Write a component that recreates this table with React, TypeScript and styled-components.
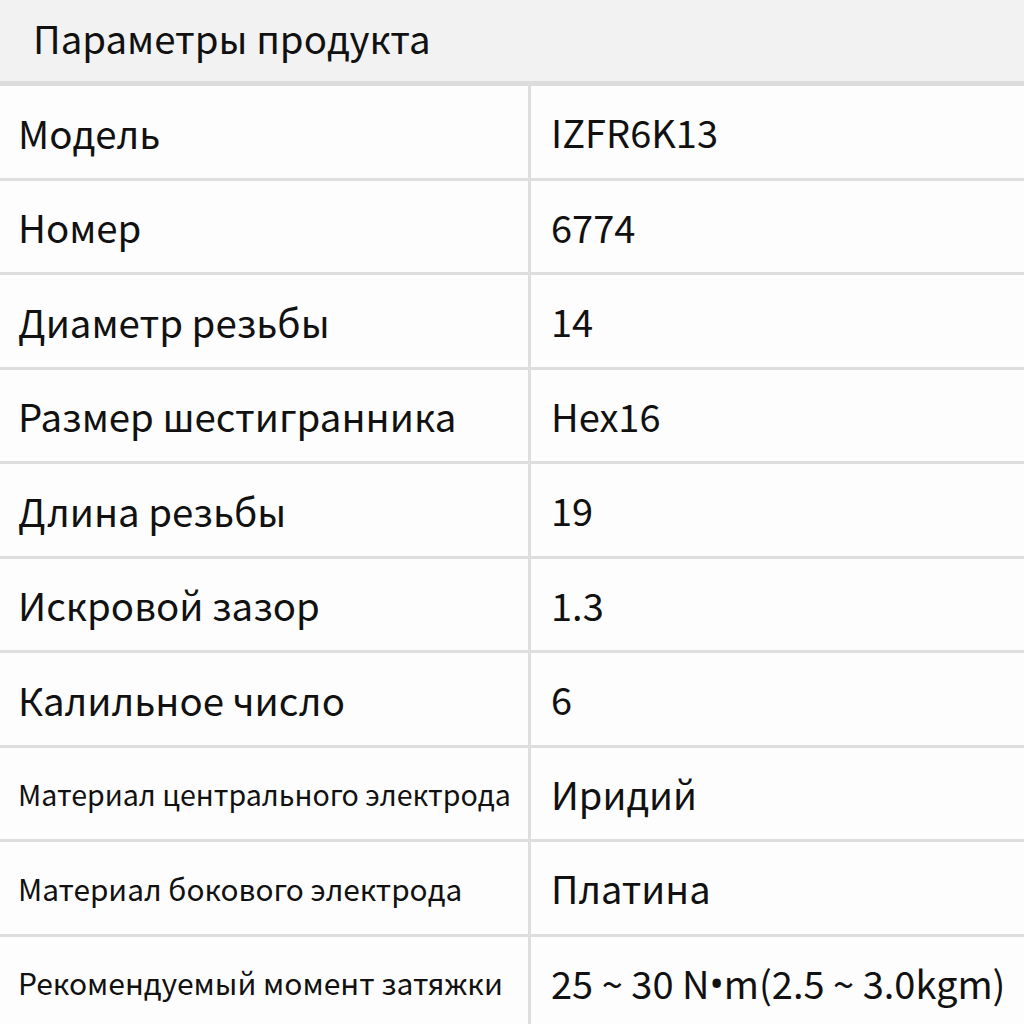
import React from 'react';
import styled, { createGlobalStyle } from 'styled-components';

const GlobalStyle = createGlobalStyle`
  html, body {
    margin: 0;
    padding: 0;
    background: #ffffff;
  }
  body {
    font-family: "Noto Sans CJK SC", "Noto Sans", sans-serif;
    color: #111111;
  }
`;

const StyledPage = styled.div`
  width: 1024px;
  height: 1024px;
  overflow: hidden;
  background: #fdfdfd;
`;

const StyledHeader = styled.div`
  height: 86px;
  box-sizing: border-box;
  display: flex;
  align-items: center;
  padding: 0 0 6px 33px;
  background: #f2f2f2;
  border-bottom: 5px solid #dcdcdc;
  font-size: 38.4px;
  line-height: 1;
`;

const StyledRow = styled.div`
  display: flex;
  height: 94.5px;
  box-sizing: border-box;
  border-bottom: 3px solid #dedede;
`;

const StyledLabel = styled.div<{ $size: number }>`
  width: 531px;
  flex-shrink: 0;
  box-sizing: border-box;
  display: flex;
  align-items: center;
  padding-left: 18px;
  border-right: 3px solid #dedede;
  font-size: ${(p) => p.$size}px;
  white-space: nowrap;
`;

const StyledValue = styled.div`
  flex: 1;
  display: flex;
  align-items: center;
  padding-left: 20px;
  font-size: 38px;
  white-space: nowrap;
`;

const StyledDot = styled.span`
  font-family: "Noto Sans", sans-serif;
`;

type Param = {
    label: string
    value: string
    size?: number
}

const params: Param[] = [
    { label: 'Модель', value: 'IZFR6K13' },
    { label: 'Номер', value: '6774' },
    { label: 'Диаметр резьбы', value: '14' },
    { label: 'Размер шестигранника', value: 'Hex16' },
    { label: 'Длина резьбы', value: '19' },
    { label: 'Искровой зазор', value: '1.3' },
    { label: 'Калильное число', value: '6' },
    { label: 'Материал центрального электрода', value: 'Иридий', size: 28.6 },
    { label: 'Материал бокового электрода', value: 'Платина', size: 29.8 },
    { label: 'Рекомендуемый момент затяжки', value: '25 ~ 30 N•m(2.5 ~ 3.0kgm)', size: 30 },
]

const renderValue = (value: string) => {
    const parts = value.split('•')
    if (parts.length === 1) return value
    return (
        <>
            {parts[0]}
            <StyledDot>•</StyledDot>
            {parts[1]}
        </>
    )
}

export default function App() {
    return (
        <StyledPage>
            <GlobalStyle />
            <StyledHeader>Параметры продукта</StyledHeader>
            {params.map((p) => (
                <StyledRow key={p.label}>
                    <StyledLabel $size={p.size ?? 38.4}>{p.label}</StyledLabel>
                    <StyledValue>{renderValue(p.value)}</StyledValue>
                </StyledRow>
            ))}
        </StyledPage>
    )
}
